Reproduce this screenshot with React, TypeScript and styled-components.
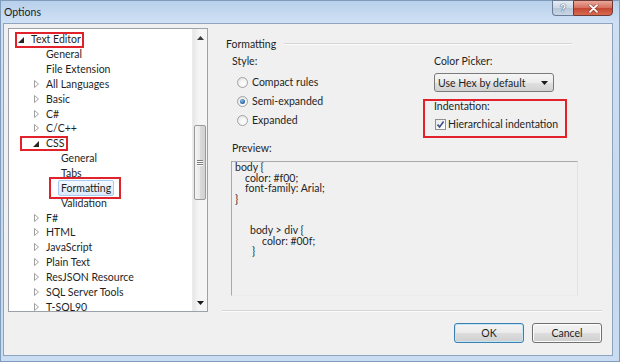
import React from 'react';
import styled, { createGlobalStyle } from 'styled-components';

const UI_FONT = `Lato, "Liberation Sans", sans-serif`;

const GlobalStyle = createGlobalStyle`
  html, body { margin: 0; padding: 0; }
  body { width: 620px; height: 362px; overflow: hidden; background: #c9dbf0; font-family: ${UI_FONT}; }
  * { box-sizing: border-box; }
`;

const Window = styled.div`
  width: 620px;
  height: 362px;
  display: flex;
  flex-direction: column;
  background: linear-gradient(to bottom, #b7cfeb 0px, #cfe0f4 22px, #c4d8ef 60%, #c9dcf1 100%);
  box-shadow: inset 0 0 0 1px #7f9cbd;
  font-family: ${UI_FONT};
  font-size: 10.5px;
  color: #1f1f1f;
`;

const TitleBar = styled.div`
  height: 23px;
  flex: none;
  display: flex;
  align-items: flex-start;
  padding: 0 7px 0 4px;
`;

const TitleText = styled.div`
  line-height: 24px;
  font-size: 10.5px;
  color: #1b1b1b;
`;

const CaptionButtons = styled.div`
  margin-left: auto;
  display: flex;
  height: 16px;
`;

const HelpButton = styled.div`
  width: 21px;
  height: 16px;
  border: 1px solid #6b7c93;
  border-right: none;
  border-radius: 0 0 0 4px;
  background: linear-gradient(to bottom, #e4ebf4 0%, #cbd6e4 50%, #b8c6d8 51%, #c9d6e6 100%);
  display: flex;
  align-items: center;
  justify-content: center;
  font-family: "Liberation Sans", sans-serif;
  font-weight: bold;
  font-size: 10px;
  color: #f7f9fc;
  text-shadow: 0 0 1px #3d4c62, 0 0 1px #3d4c62;
`;

const CloseButton = styled.div`
  width: 40px;
  height: 16px;
  border: 1px solid #6d3b36;
  border-radius: 0 0 4px 0;
  background: linear-gradient(to bottom, #e9a89b 0%, #d6705f 48%, #c34631 52%, #d86a52 100%);
  display: flex;
  align-items: center;
  justify-content: center;
`;

const Client = styled.div`
  flex: 1;
  margin: 0 7px 6px 3px;
  background: #f0f0f0;
  border: 1px solid #8ea3bd;
  display: flex;
  flex-direction: column;
`;

const Body = styled.div`
  display: flex;
  padding: 4px 0 0 4px;
`;

/* ---------- Tree ---------- */

const Tree = styled.div`
  width: 200px;
  height: 284px;
  flex: none;
  border: 1px solid #9ba2ab;
  background: #ffffff;
  display: flex;
`;

const TreeList = styled.div`
  flex: 1;
  overflow: hidden;
  padding-top: 3px;
`;

const TreeRow = styled.div<{ $level: number }>`
  height: 14.85px;
  display: flex;
  align-items: center;
  padding-left: ${(p) => 7 + p.$level * 15}px;
  white-space: nowrap;
`;

const Toggle = styled.span<{ $expanded?: boolean }>`
  width: 12px;
  flex: none;
  display: flex;
  align-items: center;
  padding-left: ${(p) => (p.$expanded ? 2 : 3)}px;
  padding-top: ${(p) => (p.$expanded ? 2 : 0)}px;
`;

const Label = styled.span<{ $selected?: boolean }>`
  display: inline-flex;
  align-items: center;
  height: ${(p) => (p.$selected ? '16px' : '14px')};
  padding: 0 2px;
  border: 1px solid ${(p) => (p.$selected ? '#a9caf0' : 'transparent')};
  border-radius: 2px;
  background: ${(p) => (p.$selected ? 'linear-gradient(to bottom, #f4f9fe, #dbeafb)' : 'transparent')};
  color: #1f1f1f;
`;

const Mark = styled.span<{ $t: number; $r: number; $b: number; $l: number }>`
  position: relative;
  display: inline-flex;
  align-items: center;
  &::after {
    content: '';
    position: absolute;
    top: ${(p) => p.$t}px;
    right: ${(p) => p.$r}px;
    bottom: ${(p) => p.$b}px;
    left: ${(p) => p.$l}px;
    border: 2px solid #e2222b;
    pointer-events: none;
  }
`;

const ScrollBar = styled.div`
  width: 15px;
  flex: none;
  display: flex;
  flex-direction: column;
  background: linear-gradient(to right, #e6e6e6, #f5f5f5 40%, #f5f5f5);
  border-left: 1px solid #ececec;
`;

const ScrollArrow = styled.div`
  height: 17px;
  flex: none;
  display: flex;
  align-items: center;
  justify-content: center;
`;

const ScrollTrack = styled.div`
  flex: 1;
  padding: 0 1px;
`;

const Thumb = styled.div<{ $offset: number; $size: number }>`
  margin-top: ${(p) => p.$offset}px;
  height: ${(p) => p.$size}px;
  border: 1px solid #9a9a9a;
  border-radius: 2px;
  background: linear-gradient(to right, #f4f4f4, #e9e9e9 50%, #dadada 51%, #d2d2d2);
  display: flex;
  flex-direction: column;
  align-items: center;
  justify-content: center;
  gap: 1px;
`;

const Grip = styled.span`
  width: 6px;
  height: 1px;
  background: #7d7d7d;
  box-shadow: 0 1px 0 #fafafa;
`;

/* ---------- Right pane ---------- */

const RightPane = styled.div`
  flex: 1;
  display: flex;
  flex-direction: column;
  padding: 0 10px 0 14px;
`;

const GroupHeader = styled.div`
  margin-top: 10px;
  height: 12px;
  display: flex;
  align-items: center;
  padding-left: 4px;
  margin-right: 30px;
  line-height: 12px;
`;

const EtchedLine = styled.div`
  flex: 1;
  height: 2px;
  border-top: 1px solid #d5d5d5;
  border-bottom: 1px solid #fbfbfb;
  margin-left: 8px;
`;

const OptionsRow = styled.div`
  margin-top: 4px;
  display: flex;
`;

const StyleCol = styled.div`
  width: 212px;
  padding-left: 10px;
  display: flex;
  flex-direction: column;
`;

const PickerCol = styled.div`
  display: flex;
  flex-direction: column;
`;

const FieldLabel = styled.div<{ $top?: number }>`
  line-height: 14px;
  height: 14px;
  margin-top: ${(p) => p.$top ?? 0}px;
`;

const RadioList = styled.div`
  margin-top: 4.5px;
  display: flex;
  flex-direction: column;
`;

const RadioRow = styled.div`
  height: 19px;
  display: flex;
  align-items: center;
  padding-left: 5px;
`;

const RadioCircle = styled.span<{ $checked?: boolean }>`
  width: 11px;
  height: 11px;
  border-radius: 50%;
  border: 1px solid #a3a3a3;
  background: radial-gradient(circle at 60% 65%, #ffffff 0%, #f4f4f4 45%, #d9d9d9 100%);
  display: flex;
  align-items: center;
  justify-content: center;
  margin-right: 4px;
  flex: none;
  &::after {
    content: '';
    display: ${(p) => (p.$checked ? 'block' : 'none')};
    width: 5px;
    height: 5px;
    border-radius: 50%;
    background: radial-gradient(circle at 40% 35%, #8cc0ec 0%, #2f6aa6 60%, #1c4c80 100%);
  }
`;

const Dropdown = styled.div`
  margin-top: 5px;
  width: 120px;
  height: 19px;
  border: 1px solid #7a7a7a;
  border-radius: 3px;
  background: linear-gradient(to bottom, #f5f5f5 0%, #ececec 50%, #dfdfdf 51%, #d3d3d3 100%);
  display: flex;
  align-items: center;
  justify-content: space-between;
  padding: 0 5px 0 3px;
`;

const IndentGroup = styled.div`
  position: relative;
  margin-top: 7px;
  width: 133px;
  display: flex;
  flex-direction: column;
  &::after {
    content: '';
    position: absolute;
    top: 0;
    left: -11px;
    right: 0;
    bottom: -7px;
    border: 2px solid #e2222b;
    pointer-events: none;
  }
`;

const CheckRow = styled.div`
  margin-top: 4px;
  height: 14px;
  display: flex;
  align-items: center;
  padding-left: 1px;
`;

const CheckBox = styled.span`
  width: 11px;
  height: 11px;
  flex: none;
  border: 1px solid #8f8f8f;
  background: linear-gradient(135deg, #e9e9e9, #ffffff);
  display: flex;
  align-items: center;
  justify-content: center;
  margin-right: 2px;
`;

const PreviewLabel = styled.div`
  margin-top: 10px;
  padding-left: 10px;
  line-height: 14px;
  height: 14px;
`;

const PreviewBox = styled.div`
  margin: 6px 0 0 9px;
  width: 347px;
  height: 135px;
  border-top: 1px solid #a9a9a9;
  border-left: 1px solid #a9a9a9;
  border-right: 1px solid #e2e2e2;
  border-bottom: 1px solid #ebebeb;
  background: #f0f0f0;
  padding: 0 0 0 3px;
  font-size: 10.5px;
  color: #262626;
`;

const CodeLine = styled.div<{ $indent: number }>`
  height: 10.5px;
  line-height: 10.5px;
  padding-left: ${(p) => p.$indent}px;
  white-space: pre;
`;

const Separator = styled.div`
  margin-top: auto;
  height: 2px;
  border-top: 1px solid #d6d6d6;
  border-bottom: 1px solid #fbfbfb;
`;

/* ---------- Buttons ---------- */

const ButtonBar = styled.div`
  display: flex;
  justify-content: flex-end;
  gap: 8px;
  padding: 11px 10px 0 0;
`;

const Button = styled.div<{ $default?: boolean }>`
  width: 70px;
  height: 20px;
  border: 1px solid ${(p) => (p.$default ? '#3c7fb1' : '#707070')};
  border-radius: 3px;
  background: linear-gradient(to bottom, #f3f3f3 0%, #ebebeb 50%, #dddddd 51%, #cfcfcf 100%);
  box-shadow: ${(p) => (p.$default ? 'inset 0 0 0 1px #c4e5f6' : 'inset 0 0 0 1px #fcfcfc')};
  display: flex;
  align-items: center;
  justify-content: center;
  color: #1f1f1f;
`;

/* ---------- Icons ---------- */

const ExpandedGlyph = () => (
  <svg width="6" height="6" viewBox="0 0 6 6">
    <polygon points="6,0 6,6 0,6" fill="#262626" />
  </svg>
);

const CollapsedGlyph = () => (
  <svg width="5" height="8" viewBox="0 0 5 8">
    <polygon points="0.5,0.5 4.5,4 0.5,7.5" fill="#ffffff" stroke="#a0a0a0" strokeWidth="1" />
  </svg>
);

const ArrowUp = () => (
  <svg width="7" height="4" viewBox="0 0 7 4">
    <polygon points="0,4 3.5,0 7,4" fill="#3b3b3b" />
  </svg>
);

const ArrowDown = ({ w = 7, h = 4 }: { w?: number; h?: number }) => (
  <svg width={w} height={h} viewBox={`0 0 ${w} ${h}`}>
    <polygon points={`0,0 ${w},0 ${w / 2},${h}`} fill="#1a1a1a" />
  </svg>
);

const CloseGlyph = () => (
  <svg width="11" height="9" viewBox="0 0 11 9">
    <path d="M2 1.2 L9 7.8 M9 1.2 L2 7.8" stroke="#5a2019" strokeWidth="3" strokeLinecap="round" opacity="0.5" />
    <path d="M2 1.2 L9 7.8 M9 1.2 L2 7.8" stroke="#ffffff" strokeWidth="1.8" strokeLinecap="round" />
  </svg>
);

const CheckGlyph = () => (
  <svg width="9" height="9" viewBox="0 0 9 9">
    <path d="M1.5 4.6 L3.6 6.9 L7.6 1.6" fill="none" stroke="#3a4f8c" strokeWidth="1.6" />
  </svg>
);

/* ---------- Data ---------- */

type Node = {
  level: number;
  label: string;
  toggle?: 'open' | 'closed';
  selected?: boolean;
  mark?: { t: number; r: number; b: number; l: number; labelOnly?: boolean };
};

const nodes: Node[] = [
  { level: 0, label: 'Text Editor', toggle: 'open', mark: { t: 0, r: 0, b: -2, l: -1 } },
  { level: 1, label: 'General' },
  { level: 1, label: 'File Extension' },
  { level: 1, label: 'All Languages', toggle: 'closed' },
  { level: 1, label: 'Basic', toggle: 'closed' },
  { level: 1, label: 'C#', toggle: 'closed' },
  { level: 1, label: 'C/C++', toggle: 'closed' },
  { level: 1, label: 'CSS', toggle: 'open', mark: { t: 0, r: -1, b: -1, l: -11 } },
  { level: 2, label: 'General' },
  { level: 2, label: 'Tabs' },
  { level: 2, label: 'Formatting', selected: true, mark: { t: -3, r: -7, b: -3, l: -9, labelOnly: true } },
  { level: 2, label: 'Validation' },
  { level: 1, label: 'F#', toggle: 'closed' },
  { level: 1, label: 'HTML', toggle: 'closed' },
  { level: 1, label: 'JavaScript', toggle: 'closed' },
  { level: 1, label: 'Plain Text', toggle: 'closed' },
  { level: 1, label: 'ResJSON Resource', toggle: 'closed' },
  { level: 1, label: 'SQL Server Tools', toggle: 'closed' },
  { level: 1, label: 'T-SQL90', toggle: 'closed' },
];

const code: { indent: number; text: string }[] = [
  { indent: 0, text: 'body {' },
  { indent: 10, text: 'color: #f00;' },
  { indent: 10, text: 'font-family: Arial;' },
  { indent: 0, text: '}' },
  { indent: 0, text: '' },
  { indent: 0, text: '' },
  { indent: 15, text: 'body > div {' },
  { indent: 27, text: 'color: #00f;' },
  { indent: 17, text: '}' },
];

const TreeItem = ({ node }: { node: Node }) => {
  const toggle = (
    <Toggle $expanded={node.toggle === 'open'}>
      {node.toggle === 'open' && <ExpandedGlyph />}
      {node.toggle === 'closed' && <CollapsedGlyph />}
    </Toggle>
  );
  const label = <Label $selected={node.selected}>{node.label}</Label>;
  const m = node.mark;
  return (
    <TreeRow $level={node.level}>
      {m && !m.labelOnly ? (
        <Mark $t={m.t} $r={m.r} $b={m.b} $l={m.l}>
          {toggle}
          {label}
        </Mark>
      ) : (
        <>
          {toggle}
          {m ? (
            <Mark $t={m.t} $r={m.r} $b={m.b} $l={m.l}>
              {label}
            </Mark>
          ) : (
            label
          )}
        </>
      )}
    </TreeRow>
  );
};

export default function App() {
  return (
    <>
      <GlobalStyle />
      <Window>
        <TitleBar>
          <TitleText>Options</TitleText>
          <CaptionButtons>
            <HelpButton>?</HelpButton>
            <CloseButton>
              <CloseGlyph />
            </CloseButton>
          </CaptionButtons>
        </TitleBar>
        <Client>
          <Body>
            <Tree>
              <TreeList>
                {nodes.map((n, i) => (
                  <TreeItem key={i} node={n} />
                ))}
              </TreeList>
              <ScrollBar>
                <ScrollArrow>
                  <ArrowUp />
                </ScrollArrow>
                <ScrollTrack>
                  <Thumb $offset={79} $size={75}>
                    <Grip />
                    <Grip />
                    <Grip />
                  </Thumb>
                </ScrollTrack>
                <ScrollArrow>
                  <ArrowDown />
                </ScrollArrow>
              </ScrollBar>
            </Tree>
            <RightPane>
              <GroupHeader>
                Formatting
                <EtchedLine />
              </GroupHeader>
              <OptionsRow>
                <StyleCol>
                  <FieldLabel>Style:</FieldLabel>
                  <RadioList>
                    <RadioRow>
                      <RadioCircle />
                      Compact rules
                    </RadioRow>
                    <RadioRow>
                      <RadioCircle $checked />
                      Semi-expanded
                    </RadioRow>
                    <RadioRow>
                      <RadioCircle />
                      Expanded
                    </RadioRow>
                  </RadioList>
                </StyleCol>
                <PickerCol>
                  <FieldLabel>Color Picker:</FieldLabel>
                  <Dropdown>
                    <span>Use Hex by default</span>
                    <ArrowDown w={7} h={4} />
                  </Dropdown>
                  <IndentGroup>
                    <FieldLabel>Indentation:</FieldLabel>
                    <CheckRow>
                      <CheckBox>
                        <CheckGlyph />
                      </CheckBox>
                      Hierarchical indentation
                    </CheckRow>
                  </IndentGroup>
                </PickerCol>
              </OptionsRow>
              <PreviewLabel>Preview:</PreviewLabel>
              <PreviewBox>
                {code.map((l, i) => (
                  <CodeLine key={i} $indent={l.indent}>
                    {l.text}
                  </CodeLine>
                ))}
              </PreviewBox>
              <Separator />
            </RightPane>
          </Body>
          <ButtonBar>
            <Button $default>OK</Button>
            <Button>Cancel</Button>
          </ButtonBar>
        </Client>
      </Window>
    </>
  );
}
